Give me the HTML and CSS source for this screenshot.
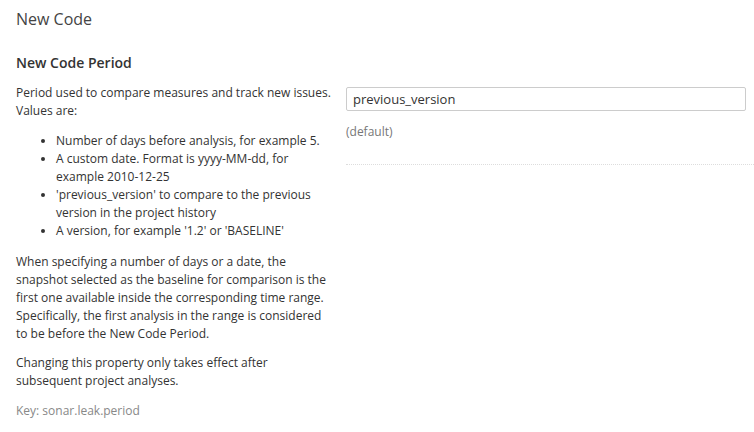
FILE: index.html
```html
<!DOCTYPE html>
<html lang="en">
<head>
  <meta charset="UTF-8">
  <title>New Code - Settings</title>
  <link rel="stylesheet" href="styles.css">
</head>
<body>
  <div class="page">
    <h2 class="page-title">New Code</h2>

    <!-- Setting: new code period -->
    <section class="setting">
      <h3 class="setting-title">New Code Period</h3>
      <div class="setting-row">
        <div class="setting-desc">
          <p>Period used to compare measures and track new issues. Values are:</p>
          <ul>
            <li>Number of days before analysis, for example 5.</li>
            <li>A custom date. Format is yyyy-MM-dd, for example 2010-12-25</li>
            <li>'previous_version' to compare to the previous version in the project history</li>
            <li>A version, for example '1.2' or 'BASELINE'</li>
          </ul>
          <p>When specifying a number of days or a date, the snapshot selected as the baseline for comparison is the first one available inside the corresponding time range. Specifically, the first analysis in the range is considered to be before the New Code Period.</p>
          <p>Changing this property only takes effect after subsequent project analyses.</p>
          <div class="setting-key">Key: sonar.leak.period</div>
        </div>

        <div class="setting-input">
          <input type="text" class="text-input" value="previous_version">
          <div class="setting-default">(default)</div>
        </div>
      </div>
    </section>
  </div>
</body>
</html>
```

FILE: styles.css
```css
* {
  margin: 0;
  padding: 0;
  box-sizing: border-box;
}

body {
  font-family: 'Open Sans', 'Noto Sans', sans-serif;
  font-size: 12px;
  line-height: 18px;
  color: #333;
  background: #fff;
}

.page {
  padding: 7px 0 0 16px;
}

.page-title {
  font-size: 16px;
  font-weight: 400;
  line-height: 24px;
  color: #444;
}

/* Setting */
.setting {
  margin-top: 23px;
}

.setting-title {
  font-size: 14px;
  font-weight: 600;
  line-height: 18px;
  color: #333;
  margin-bottom: 12px;
}

.setting-row {
  display: flex;
  gap: 12px;
}

.setting-desc {
  width: 318px;
  flex-shrink: 0;
}

.setting-desc p {
  margin-bottom: 11px;
}

.setting-desc ul {
  margin: 12px 0 13px 0;
  padding-left: 40px;
}

.setting-key {
  color: #888;
  margin-top: 12px;
}

.setting-input {
  flex: 1;
  padding-top: 3px;
  padding-bottom: 23px;
  border-bottom: 1px dotted #ddd;
  align-self: flex-start;
}

.text-input {
  display: block;
  width: 400px;
  height: 24px;
  padding: 0 6px;
  border: 1px solid #ccc;
  border-radius: 2px;
  font-family: inherit;
  font-size: 13px;
  color: #333;
}

.setting-default {
  margin-top: 12px;
  color: #777;
}
```
